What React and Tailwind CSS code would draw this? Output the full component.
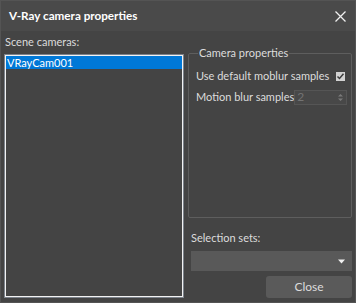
export default function App() {
  return (
    <div className="w-[356px] h-[303px] bg-[#444444] border border-[#545454] flex flex-col text-[11px] text-[#dcdcdc] overflow-hidden whitespace-nowrap" style={{ fontFamily: 'Lato, "Liberation Sans", sans-serif' }}>
      <div className="h-[30px] bg-[#4a4a4a] flex items-center justify-between pl-[8px] pr-[9px] shrink-0">
        <span className="text-[11.7px] font-bold text-white leading-none">V-Ray camera properties</span>
        <svg width="11" height="11" viewBox="0 0 11 11" className="block">
          <path d="M0.5 0.5 L10.5 10.5 M10.5 0.5 L0.5 10.5" stroke="#f0f0f0" strokeWidth="1.3" />
        </svg>
      </div>
      <div className="flex-1 flex pl-[3px] pr-[3px] pb-[4px] gap-[4px] min-h-0">
        <div className="w-[180px] flex flex-col pt-[4px]">
          <div className="h-[14px] leading-[14px] pl-[1px]">Scene cameras:</div>
          <div className="mt-[5px] flex-1 border border-[#7d838c]">
            <div className="h-full border border-[#f2f2f2]">
              <div className="h-[13px] leading-[13px] bg-[#0078d7] text-white pl-[1px]">VRayCam001</div>
            </div>
          </div>
        </div>
        <div className="w-[164px] flex flex-col pt-[14px]">
          <fieldset className="h-[173px] border border-[#5e5e5e] rounded-[2px] pl-[7px] pr-[4px] flex flex-col">
            <legend className="ml-[2px] px-[1px] h-[16px] leading-[16px]">Camera properties</legend>
            <div className="mt-[7px] h-[16px] flex items-center justify-between">
              <span>Use default moblur samples</span>
              <div className="w-[9px] h-[9px] shrink-0 bg-[#d2d2d2] mr-[2px] flex items-center justify-center">
                <svg width="9" height="9" viewBox="0 0 9 9" className="block">
                  <path d="M1.5 4.5 L3.5 6.5 L7.5 1.8" stroke="#3c3c3c" strokeWidth="1.5" fill="none" />
                </svg>
              </div>
            </div>
            <div className="mt-[4px] h-[18px] flex items-center justify-between">
              <span>Motion blur samples</span>
              <div className="w-[53px] h-[15px] shrink-0 bg-[#484848] border border-[#555555] flex items-center justify-between pl-[2px] pr-[3px]">
                <span className="text-[#737373] leading-none text-[12px]">2</span>
                <svg width="5" height="9" viewBox="0 0 5 9" className="block">
                  <path d="M0 3.5 L2.5 1 L5 3.5 Z M0 5.5 L2.5 8 L5 5.5 Z" fill="#7a7a7a" />
                </svg>
              </div>
            </div>
          </fieldset>
          <div className="mt-[13px] h-[14px] leading-[14px] pl-[3px]">Selection sets:</div>
          <div className="mt-[6px] ml-[3px] w-[161px] h-[20px] bg-[#595959] flex items-center justify-end pr-[7px]">
            <svg width="7" height="5" viewBox="0 0 7 5" className="block">
              <path d="M0 0.5 L7 0.5 L3.5 4.5 Z" fill="#f0f0f0" />
            </svg>
          </div>
          <div className="mt-[5px] self-end w-[86px] h-[22px] bg-[#5a5a5a] rounded-[3px] flex items-center justify-center text-[12px]">Close</div>
        </div>
      </div>
    </div>
  );
}
